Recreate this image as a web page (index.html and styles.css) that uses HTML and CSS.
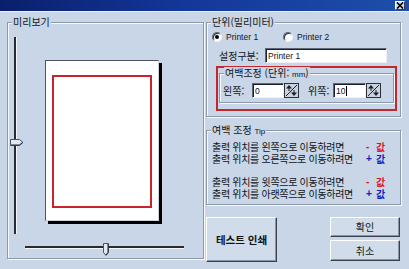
FILE: index.html
```html
<!DOCTYPE html>
<html lang="ko">
<head>
<meta charset="utf-8">
<link rel="stylesheet" href="styles.css">
</head>
<body>
<div class="window">
  <div class="titlebar">
    <span class="close"><svg width="8" height="7" viewBox="0 0 8 7"><path d="M1 0.5 L7 6.5 M7 0.5 L1 6.5" stroke="#000" stroke-width="1.6"/></svg></span>
  </div>
  <div class="main">
    <div class="group preview">
      <span class="group-label">미리보기</span>
      <div class="preview-row">
        <div class="vslider">
          <div class="vtrack"></div>
          <svg class="vthumb" width="14" height="7" viewBox="0 0 14 7"><path d="M0.5 0.5 H9.5 L13 3.5 L9.5 6.5 H0.5 Z" fill="#e4e8ee" stroke="#4a5262"/><path d="M1 6 H9.3 L12.5 3.5" fill="none" stroke="#20242c"/></svg>
        </div>
        <div class="paper"><div class="margin-box"></div></div>
      </div>
      <div class="hslider">
        <div class="htrack"></div>
        <svg class="hthumb" width="6" height="13" viewBox="0 0 6 13"><path d="M0.5 0.5 H5.5 V9.5 L3 12.5 L0.5 9.5 Z" fill="#e4e8ee" stroke="#4a5262"/><path d="M5 1 V9.3 L3 12" fill="none" stroke="#20242c"/></svg>
      </div>
    </div>
    <div class="right">
      <div class="group unit">
        <span class="group-label">단위(밀리미터)</span>
        <div class="radios">
          <span class="radio first"><span class="dot checked"></span>Printer 1</span>
          <span class="radio"><span class="dot"></span>Printer 2</span>
        </div>
        <div class="setting-row">
          <span class="setting-label">설정구분:</span>
          <span class="field wide">Printer 1</span>
        </div>
        <div class="highlight">
          <div class="group inner">
            <span class="group-label">여백조정 (단위: <small>mm</small>)</span>
            <div class="margin-row">
              <span class="m-label left-label">왼쪽:</span>
              <span class="spin-field"><span class="field val">0</span><svg class="spin" width="15" height="15" viewBox="0 0 15 15"><rect x="0.5" y="0.5" width="14" height="14" fill="#c9d2de" stroke="#2a2f38"/><path d="M13 2 L2 13" stroke="#1a1e26"/><path d="M5 2 L2 5.5 H8 Z" fill="#1a1e26"/><path d="M5 5 V8" stroke="#1a1e26"/><path d="M10 13 L7 9.5 H13 Z" fill="#1a1e26"/><path d="M10 7 V10" stroke="#1a1e26"/></svg></span>
              <span class="m-label top-label">위쪽:</span>
              <span class="spin-field second"><span class="field val">10<i class="caret"></i></span><svg class="spin" width="15" height="15" viewBox="0 0 15 15"><rect x="0.5" y="0.5" width="14" height="14" fill="#c9d2de" stroke="#2a2f38"/><path d="M13 2 L2 13" stroke="#1a1e26"/><path d="M5 2 L2 5.5 H8 Z" fill="#1a1e26"/><path d="M5 5 V8" stroke="#1a1e26"/><path d="M10 13 L7 9.5 H13 Z" fill="#1a1e26"/><path d="M10 7 V10" stroke="#1a1e26"/></svg></span>
            </div>
          </div>
        </div>
      </div>
      <div class="group tip">
        <span class="group-label">여백 조정 <small>Tip</small></span>
        <div class="tip-block">
          <div class="tip-row"><span class="tip-text">출력 위치를 왼쪽으로 이동하려면</span><span class="sign minus">-</span><span class="minus">값</span></div>
          <div class="tip-row"><span class="tip-text">출력 위치를 오른쪽으로 이동하려면</span><span class="sign plus">+</span><span class="plus">값</span></div>
        </div>
        <div class="tip-block second-block">
          <div class="tip-row"><span class="tip-text">출력 위치를 윗쪽으로 이동하려면</span><span class="sign minus">-</span><span class="minus">값</span></div>
          <div class="tip-row"><span class="tip-text">출력 위치를 아랫쪽으로 이동하려면</span><span class="sign plus">+</span><span class="plus">값</span></div>
        </div>
      </div>
      <div class="buttons">
        <button class="btn big">테스트 인쇄</button>
        <div class="btn-col">
          <button class="btn ok">확인</button>
          <button class="btn cancel">취소</button>
        </div>
      </div>
    </div>
  </div>
</div>
</body>
</html>
```

FILE: styles.css
```css
* { box-sizing: border-box; }
html, body { margin: 0; padding: 0; }
body {
  width: 409px;
  height: 269px;
  overflow: hidden;
  background: #c8d6e7;
  font-family: "Noto Sans CJK KR", "Liberation Sans", sans-serif;
  font-size: 10px;
  color: #111418;
}
.window {
  width: 409px;
  height: 269px;
  background: #c8d6e7;
  display: flex;
  flex-direction: column;
}
.titlebar {
  height: 12px;
  flex: none;
  background: linear-gradient(to right, #0a1f6c 0%, #13379a 45%, #1e4eaa 100%);
  border-bottom: 1px solid #e9eff7;
  display: flex;
  justify-content: flex-end;
  align-items: flex-start;
  padding-right: 4px;
}
.close {
  width: 10px;
  height: 9px;
  margin-top: 1px;
  background: #d6dde8;
  border: 1px solid;
  border-color: #ffffff #3a4050 #3a4050 #ffffff;
  display: flex;
  align-items: center;
  justify-content: center;
}
.close svg { display: block; }
.main {
  display: flex;
  padding: 10px 0 0 7px;
  gap: 2px;
}
.group {
  position: relative;
  border: 1px solid #8d99ab;
  box-shadow: inset 1px 1px 0 #f6f9fd, 1px 1px 0 #f6f9fd;
}
.group-label {
  position: absolute;
  top: -7px;
  left: 4px;
  padding: 0 1px;
  background: #c8d6e7;
  line-height: 12px;
  font-size: 10px;
  white-space: nowrap;
}
.group-label small {
  font-family: "Liberation Sans", sans-serif;
  font-size: 8px;
}

/* preview */
.preview {
  width: 197px;
  height: 237px;
  padding-top: 14px;
}
.preview-row {
  display: flex;
  height: 197px;
}
.vslider {
  position: relative;
  width: 14px;
  flex: none;
}
.vtrack {
  margin-left: 6px;
  width: 2px;
  height: 100%;
  background: #262b34;
  box-shadow: 1px 0 0 #f2f5fa;
}
.vthumb {
  position: absolute;
  left: 2px;
  top: 102px;
  display: block;
}
.paper {
  margin-left: 23px;
  margin-top: 23px;
  width: 114px;
  height: 161px;
  background: #ffffff;
  border: 1px solid;
  border-color: #4d5464 #cfd4dc #cfd4dc #4d5464;
  box-shadow: 3px 3px 0 #000000;
  padding: 14px 0 0 6px;
}
.margin-box {
  width: 100px;
  height: 133px;
  border: 2px solid #c4262c;
}
.hslider {
  position: relative;
  margin-top: 8px;
  margin-left: 17px;
  width: 159px;
  height: 14px;
}
.htrack {
  position: relative;
  top: 4px;
  height: 2px;
  background: #262b34;
  box-shadow: 0 1px 0 #f2f5fa;
}
.hthumb {
  position: absolute;
  left: 78px;
  top: 1px;
  display: block;
}

/* right column */
.right {
  width: 195px;
  display: flex;
  flex-direction: column;
}
.unit {
  height: 95px;
  padding: 8px 0 0 5px;
}
.radios {
  display: flex;
  align-items: center;
  height: 12px;
  font-family: "Liberation Sans", sans-serif;
  font-size: 8.5px;
}
.radio {
  display: flex;
  align-items: center;
  gap: 4px;
}
.radio.first { width: 71px; }
.dot {
  width: 10px;
  height: 10px;
  border-radius: 50%;
  background: #ffffff;
  border: 1px solid;
  border-color: #5e6676 #f2f5fa #f2f5fa #5e6676;
  box-shadow: inset 1px 1px 0 #2a2f38;
  position: relative;
}
.dot.checked::after {
  content: "";
  position: absolute;
  left: 2px;
  top: 2px;
  width: 4px;
  height: 4px;
  border-radius: 50%;
  background: #000000;
}
.setting-row {
  display: flex;
  align-items: center;
  margin-top: 5px;
  height: 15px;
  padding-left: 7px;
}
.setting-label {
  width: 46px;
  line-height: 12px;
}
.field {
  display: flex;
  align-items: center;
  height: 15px;
  background: #ffffff;
  border: 1px solid;
  border-color: #5c6676 #eef2f8 #eef2f8 #5c6676;
  box-shadow: inset 1px 1px 0 #1c2028;
  font-family: "Liberation Sans", sans-serif;
  font-size: 8.5px;
  padding-left: 2px;
}
.field.wide { width: 122px; }
.highlight {
  margin-top: 3px;
  margin-left: 4px;
  width: 181px;
  height: 45px;
  border: 2px solid #c4262d;
  padding: 5px 0 0 1px;
}
.inner {
  width: 175px;
  height: 30px;
  padding: 9px 0 0 3px;
}
.margin-row {
  display: flex;
  align-items: center;
  height: 15px;
}
.m-label { line-height: 12px; }
.left-label { width: 29px; }
.top-label { width: 25px; margin-left: 9px; }
.spin-field {
  display: flex;
  width: 47px;
}
.spin-field.second { width: 48px; }
.field.val { flex: 1; }
.spin { display: block; flex: none; }
.caret {
  display: inline-block;
  width: 1px;
  height: 10px;
  background: #000;
  margin-left: 1px;
}

/* tips */
.tip {
  margin-top: 13px;
  height: 75px;
  padding: 10px 12px 0 5px;
}
.tip-row {
  display: grid;
  grid-template-columns: minmax(0, 1fr) 10px 12px;
  line-height: 12px;
  height: 12px;
  white-space: nowrap;
  font-size: 10px;
}
.tip-text { letter-spacing: -0.3px; }
.second-block { margin-top: 11px; }
.sign {
  font-family: "Liberation Sans", sans-serif;
  font-weight: bold;
  font-size: 10px;
}
.minus { color: #e0101c; font-weight: bold; }
.plus { color: #1420b8; font-weight: bold; }

/* buttons */
.buttons {
  display: flex;
  justify-content: space-between;
  margin-top: 12px;
  padding-right: 1px;
}
.btn {
  font-family: "Noto Sans CJK KR", sans-serif;
  font-size: 10px;
  color: #101418;
  background: #d0dcea;
  border: 1px solid;
  border-color: #ffffff #3a4250 #3a4250 #ffffff;
  box-shadow: inset -1px -1px 0 #8694a8;
  padding: 0;
  margin: 0;
  line-height: 12px;
}
.big {
  width: 71px;
  height: 45px;
  font-weight: bold;
  font-size: 10.5px;
}
.btn-col {
  display: flex;
  flex-direction: column;
  gap: 3px;
  width: 70px;
}
.ok { height: 20px; }
.cancel { height: 21px; }
```
